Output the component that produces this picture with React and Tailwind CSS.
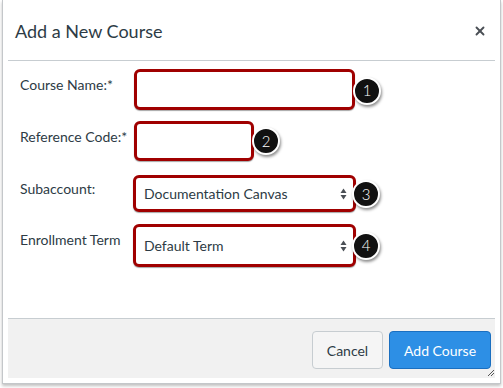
import { X } from "lucide-react";

const Callout = ({ n, className = "" }) => (
  <div
    className={`relative z-10 flex h-[28px] w-[28px] shrink-0 items-center justify-center rounded-full border-2 border-white bg-[#111] text-[15px] font-light leading-none text-white shadow-[1px_2px_3px_rgba(0,0,0,0.45)] ${className}`}
  >
    {n}
  </div>
);

const SelectArrows = () => (
  <svg width="7" height="12" viewBox="0 0 7 12" className="shrink-0">
    <path d="M3.5 0.5 L6.5 5 L0.5 5 Z" fill="#4a4f55" />
    <path d="M3.5 11.5 L6.5 7 L0.5 7 Z" fill="#4a4f55" />
  </svg>
);

const Field = ({ label, labelPad, boxClass, callout, calloutClass, children }) => (
  <div className="flex items-start">
    <div className={`w-[114px] shrink-0 text-[14px] leading-[20px] text-[#2d3b45] ${labelPad}`}>
      {label}
    </div>
    <div className="flex items-center">
      <div
        className={`flex items-center rounded-[6px] border-[3px] border-[#a00000] bg-white shadow-[0_1px_1px_rgba(0,0,0,0.35)] ${boxClass}`}
      >
        {children}
      </div>
      <Callout n={callout} className={calloutClass} />
    </div>
  </div>
);

export default function App() {
  return (
    <div className="h-[388px] w-[503px] bg-white font-['Lato','Open_Sans',sans-serif]">
      <div className="relative ml-[2px] flex h-[384px] w-[499px] flex-col border-x border-b border-[#c4c7ca] px-[5px] shadow-[0_2px_3px_rgba(0,0,0,0.25)]">
        {/* header */}
        <div className="flex h-[61px] shrink-0 items-center justify-between border-b border-[#c7cdd1] pl-[7px] pr-[8px] pt-[2px]">
          <h1 className="text-[18px] font-normal text-[#2d3b45]">Add a New Course</h1>
          <X size={14} strokeWidth={3.2} className="text-[#4a4f55]" />
        </div>

        {/* body */}
        <div className="flex h-[257px] shrink-0 flex-col pl-[12px] pt-[8px]">
          <Field
            label="Course Name:*"
            labelPad="pt-[6px]"
            boxClass="w-[221px] h-[41px]"
            callout="1"
            calloutClass="-ml-[2px] mt-[2px]"
          />
          <div className="mt-[11px]">
            <Field
              label="Reference Code:*"
              labelPad="pt-[6px]"
              boxClass="w-[120px] h-[40px]"
              callout="2"
              calloutClass="-ml-[2px]"
            />
          </div>
          <div className="mt-[14px]">
            <Field
              label="Subaccount:"
              labelPad="pt-[4px]"
              boxClass="-ml-[1px] w-[223px] h-[37px] pl-[8px] pr-[6px] justify-between"
              callout="3"
              calloutClass="-ml-[4px] mt-[1px]"
            >
              <span className="text-[14px] text-[#2d3b45]">Documentation Canvas</span>
              <SelectArrows />
            </Field>
          </div>
          <div className="mt-[12px]">
            <Field
              label="Enrollment Term"
              labelPad="pt-[6px]"
              boxClass="-ml-[1px] w-[223px] h-[43px] pl-[8px] pr-[6px] justify-between"
              callout="4"
              calloutClass="-ml-[4px]"
            >
              <span className="text-[14px] text-[#2d3b45]">Default Term</span>
              <SelectArrows />
            </Field>
          </div>
        </div>

        {/* footer */}
        <div className="flex h-[60px] shrink-0 items-start justify-end gap-[6px] border-t border-[#c7cdd1] bg-[#f1f1f1] pr-[4px] pt-[12px]">
          <button className="h-[38px] w-[71px] rounded-[4px] border border-[#c7cdd1] bg-[#f5f5f5] text-[14px] text-[#2d3b45]">
            Cancel
          </button>
          <button className="h-[38px] w-[102px] rounded-[4px] border border-[#1a6fc0] bg-[#2d8fe5] text-[14px] text-white">
            Add Course
          </button>
        </div>

        {/* resize grip */}
        <svg width="8" height="8" viewBox="0 0 8 8" className="absolute bottom-[6px] right-[5px]">
          <path d="M1 7 L7 1 M4 7 L7 4" stroke="#555" strokeWidth="1" />
        </svg>
      </div>
    </div>
  );
}
